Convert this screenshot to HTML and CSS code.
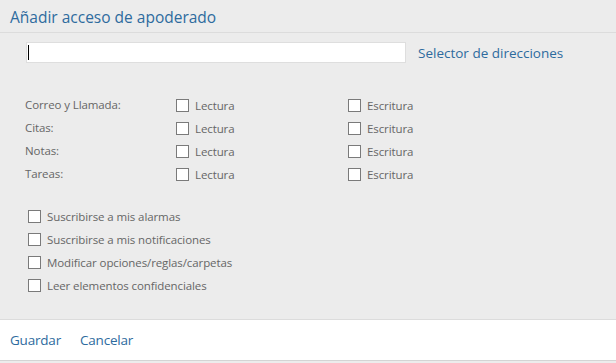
FILE: index.html
```html
<!DOCTYPE html>
<html lang="es">
<head>
    <meta charset="UTF-8">
    <meta name="viewport" content="width=device-width, initial-scale=1.0">
    <title>Añadir acceso de apoderado</title>
    <link rel="stylesheet" href="styles.css">
</head>
<body>
    <!-- Header -->
    <header class="dlg_head">
        <h1>Añadir acceso de apoderado</h1>
    </header>

    <main class="dlg_body">
        <!-- Delegate input -->
        <div class="pick_row">
            <div class="pick_input"><span class="caret"></span></div>
            <a href="#" class="pick_link">Selector de direcciones</a>
        </div>

        <!-- Folder permissions -->
        <div class="perm_grid">
            <span class="perm_lbl">Correo y Llamada:</span>
            <label class="chk"><span class="box"></span>Lectura</label>
            <label class="chk"><span class="box"></span>Escritura</label>

            <span class="perm_lbl">Citas:</span>
            <label class="chk"><span class="box"></span>Lectura</label>
            <label class="chk"><span class="box"></span>Escritura</label>

            <span class="perm_lbl">Notas:</span>
            <label class="chk"><span class="box"></span>Lectura</label>
            <label class="chk"><span class="box"></span>Escritura</label>

            <span class="perm_lbl">Tareas:</span>
            <label class="chk"><span class="box"></span>Lectura</label>
            <label class="chk"><span class="box"></span>Escritura</label>
        </div>

        <!-- Extra options -->
        <div class="opt_list">
            <label class="chk"><span class="box"></span>Suscribirse a mis alarmas</label>
            <label class="chk"><span class="box"></span>Suscribirse a mis notificaciones</label>
            <label class="chk"><span class="box"></span>Modificar opciones/reglas/carpetas</label>
            <label class="chk"><span class="box"></span>Leer elementos confidenciales</label>
        </div>
    </main>

    <!-- Footer actions -->
    <footer class="dlg_foot">
        <a href="#">Guardar</a>
        <a href="#">Cancelar</a>
    </footer>
</body>
</html>
```

FILE: styles.css
```css
/* Page base */
body {
    margin: 0;
    background-color: #ececec;
    font-family: "Open Sans", "Noto Sans", Arial, sans-serif;
    color: #666;
    width: 616px;
    height: 363px;
    overflow: hidden;
}
a {
    color: #2e6b9e;
    text-decoration: none;
}
/* Header with title */
.dlg_head {
    height: 33px;
    border-bottom: 1px solid #dcdcdc;
    padding-left: 10px;
    box-sizing: border-box;
}
.dlg_head h1 {
    margin: 0;
    font-size: 15.5px;
    font-weight: normal;
    color: #2e6b9e;
    line-height: 34px;
}
/* Body */
.dlg_body {
    height: 286px;
    padding-top: 9px;
    box-sizing: border-box;
}
.pick_row {
    display: flex;
    align-items: center;
    padding-left: 26px;
    gap: 12px;
}
.pick_input {
    width: 380px;
    height: 21px;
    box-sizing: border-box;
    background-color: #fff;
    border: 1px solid #dedede;
    display: flex;
    align-items: center;
    padding-left: 1px;
}
.caret {
    width: 1px;
    height: 15px;
    background-color: #000;
}
.pick_link {
    font-size: 13.5px;
}
/* Permission grid */
.perm_grid {
    display: grid;
    grid-template-columns: 151px 172px auto;
    grid-auto-rows: 23px;
    margin-top: 30px;
    padding-left: 25px;
    font-size: 11.5px;
}
.perm_lbl {
    display: flex;
    align-items: center;
    letter-spacing: -0.1px;
}
.chk {
    display: flex;
    align-items: center;
    gap: 6px;
    letter-spacing: -0.1px;
}
.box {
    width: 13px;
    height: 13px;
    box-sizing: border-box;
    border: 1px solid #7a7a7a;
    background-color: #fff;
    flex: none;
}
.perm_grid .chk {
    padding-top: 1px;
}
/* Extra options list */
.opt_list {
    display: grid;
    grid-auto-rows: 23px;
    margin-top: 19px;
    padding-left: 28px;
    font-size: 11.5px;
}
.opt_list .chk {
    padding-top: 1px;
}
/* Footer */
.dlg_foot {
    height: 42px;
    box-sizing: border-box;
    background-color: #fff;
    border-top: 1px solid #dcdcdc;
    border-bottom: 1px solid #d4d4d4;
    display: flex;
    align-items: center;
    padding-left: 10px;
    gap: 19px;
    font-size: 13.5px;
    letter-spacing: -0.2px;
}
```
